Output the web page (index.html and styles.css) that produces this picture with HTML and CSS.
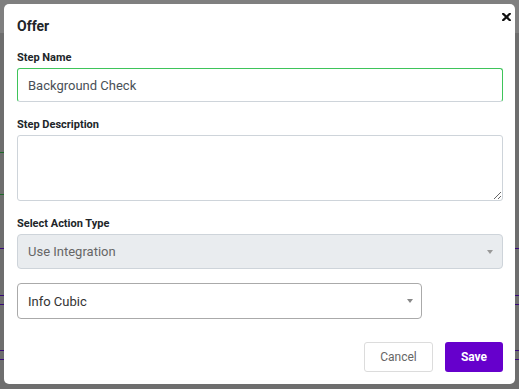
FILE: index.html
```html
<!DOCTYPE html>
<html lang="en">
<head>
  <meta charset="UTF-8">
  <title>Offer</title>
  <link rel="stylesheet" href="styles.css">
</head>
<body>

  <div class="page">
    <div class="page-header"></div>
    <div class="page-body">
      <div class="rule-pair green"></div>
      <div class="rule purple"></div>
      <div class="rule-pair purple"></div>
      <div class="rule-pair purple last"></div>
    </div>
  </div>

  <div class="overlay">
    <div class="modal">
      <button type="button" class="close" aria-label="Close">
        <svg width="9" height="8" viewBox="0 0 9 8">
          <path d="M1.2 0.8 L7.8 7.2 M7.8 0.8 L1.2 7.2" stroke="#111" stroke-width="2.2" stroke-linecap="square"/>
        </svg>
      </button>

      <h2 class="modal-title">Offer</h2>

      <form class="modal-form">
        <div class="field">
          <label for="step-name">Step Name</label>
          <input type="text" id="step-name" class="control valid" value="Background Check">
        </div>

        <div class="field">
          <label for="step-desc">Step Description</label>
          <textarea id="step-desc" class="control"></textarea>
        </div>

        <div class="field">
          <label for="action-type">Select Action Type</label>
          <div class="select disabled">
            <select id="action-type" disabled>
              <option>Use Integration</option>
            </select>
          </div>
        </div>

        <div class="row">
          <div class="col-10">
            <div class="select">
              <select id="integration">
                <option>Info Cubic</option>
              </select>
            </div>
          </div>
        </div>

        <div class="modal-footer">
          <button type="button" class="btn btn-cancel">Cancel</button>
          <button type="submit" class="btn btn-save">Save</button>
        </div>
      </form>
    </div>
  </div>

</body>
</html>
```

FILE: styles.css
```css
* {
  box-sizing: border-box;
}

body {
  margin: 0;
  font-family: Roboto, "Liberation Sans", sans-serif;
  background-color: #6e6e6e;
  overflow: hidden;
}

/* page behind the modal */
.page-header {
  height: 33px;
  background-color: #7f7f7f;
}

.page-body {
  padding-top: 119px;
}

.rule-pair {
  height: 43px;
  border-top: 1px solid;
  border-bottom: 1px solid;
}

.rule-pair.green {
  width: 200px;
  border-color: #1f6b2a;
}

.rule {
  height: 1px;
  margin-top: 53px;
}

.rule.purple {
  background-color: #3a0a7a;
}

.rule-pair.purple {
  height: 10px;
  margin-top: 46px;
  border-color: #3a0a7a;
}

.rule-pair.purple.last {
  margin-top: 45px;
}

/* modal */
.overlay {
  position: fixed;
  top: 0;
  left: 0;
  right: 0;
  bottom: 0;
  padding: 4px;
}

.modal {
  position: relative;
  height: 380px;
  background-color: white;
  border-radius: 5px;
  padding: 14px 12px 12px 13px;
}

.close {
  position: absolute;
  top: 9px;
  right: 4px;
  padding: 0;
  border: none;
  background: none;
  line-height: 0;
  cursor: pointer;
}

.modal-title {
  margin: 0;
  font-size: 14px;
  line-height: 17px;
  font-weight: bold;
  color: #212529;
}

.modal-form {
  margin-top: 16px;
  display: flex;
  flex-direction: column;
}

.field {
  margin-bottom: 16px;
}

label {
  display: block;
  font-size: 11px;
  line-height: 13px;
  font-weight: bold;
  color: #212529;
  margin-bottom: 4px;
}

.control {
  display: block;
  width: 100%;
  font-family: inherit;
  font-size: 13px;
  color: #495057;
  border: 1px solid #ced4da;
  border-radius: 3px;
  padding: 0 10px;
  outline: none;
}

input.control {
  height: 34px;
}

.control.valid {
  border-color: #3ec45a;
  border-bottom-color: #ced4da;
}

textarea.control {
  height: 66px;
  resize: vertical;
  padding-top: 6px;
}

.select {
  position: relative;
}

.select select {
  display: block;
  width: 100%;
  height: 36px;
  appearance: none;
  -webkit-appearance: none;
  font-family: inherit;
  font-size: 13px;
  color: #333;
  background-color: white;
  border: 1px solid #aaa;
  border-radius: 4px;
  padding: 0 10px;
  outline: none;
}

.select.disabled select {
  height: 35px;
  color: #666;
  background-color: #e9ecef;
  border-color: #ced4da;
  opacity: 1;
}

.select::after {
  content: "";
  position: absolute;
  right: 9px;
  top: 16px;
  border-left: 3px solid transparent;
  border-right: 3px solid transparent;
  border-top: 4px solid #888;
}

.select.disabled::after {
  right: 10px;
  border-top-color: #999;
}

.row {
  display: flex;
  margin-top: -2px;
}

.col-10 {
  width: 83.333%;
}

.modal-footer {
  display: flex;
  justify-content: flex-end;
  gap: 12px;
  margin-top: 23px;
}

.btn {
  height: 30px;
  font-family: inherit;
  font-size: 12px;
  border-radius: 3px;
  cursor: pointer;
}

.btn-cancel {
  width: 69px;
  background-color: white;
  color: #666;
  border: 1px solid #dcdcdc;
}

.btn-save {
  width: 58px;
  background-color: #6600cc;
  color: white;
  font-weight: bold;
  border: none;
}
```
